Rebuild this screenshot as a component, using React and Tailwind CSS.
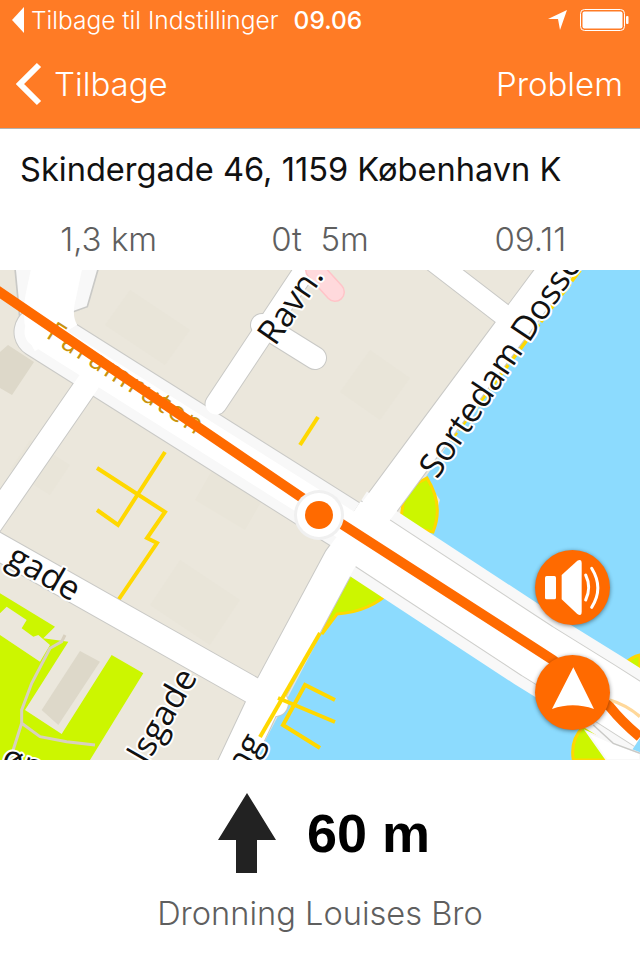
import React from "react";

const MAP_FONT = "'Open Sans', sans-serif";

// Zoomed crop coordinates (3x) are easier to trace, so map shapes sit in scaled groups
const Crop = ({ x, y, children }) => (
  <g transform={`translate(${x} ${y}) scale(0.3333)`}>{children}</g>
);

const Label = ({ x, y, rotate, anchor = "start", size = 34, children }) => (
  <text
    transform={`translate(${x} ${y}) rotate(${rotate})`}
    textAnchor={anchor}
    fontFamily={MAP_FONT}
    fontSize={size}
    fill="#111"
    stroke="#fff"
    strokeWidth="4"
    strokeLinejoin="round"
    style={{ paintOrder: "stroke" }}
  >
    {children}
  </text>
);

const StreetMap = () => {
  const sideRoads = [
    { d: "M88 383 L-10 525", w: 23 },
    { d: "M-10 542 L275 703", w: 26 },
    { d: "M216 404 L305 270", w: 21 },
    { d: "M262 325 L315 358", w: 22 },
    { d: "M435 262 L505 316", w: 21 },
    { d: "M555 270 L431 437 L340 560 L265 700 L232 770", w: 33 },
  ];
  const landRoad = "M40 332 L370 540";
  const bridge = "M345 525 L537 651 L600 690 L650 722";

  return (
    <svg viewBox="0 270 640 490" width="640" height="490" className="block">
      <rect x="0" y="270" width="640" height="490" fill="#ebe7dc" />

      {/* faint building blocks */}
      <g fill="#e9e5d9">
        <polygon points="130,290 190,330 165,365 105,325" />
        <polygon points="370,350 410,378 380,420 340,392" />
        <polygon points="180,560 240,600 210,645 150,605" />
        <polygon points="215,465 265,495 245,530 195,500" />
        <polygon points="30,440 70,465 50,495 10,470" />
      </g>
      <polygon points="0,352 8,345 34,362 12,395 0,388" fill="#ddd8c9" />

      {/* water */}
      <polygon
        points="580,270 640,270 640,760 255,760 322,632 340,612 392,590 430,530 440,500 425,478 453,437"
        fill="#8cdbfe"
      />
      <path d="M580 270 L453 437" stroke="#ffd800" strokeWidth="4" strokeDasharray="14 3" fill="none" />

      {/* park and islands */}
      <Crop x={0} y={510}>
        <polygon
          points="0,250 165,350 130,385 205,395 75,600 185,672 335,435 430,490 270,750 0,750"
          fill="#ccf600"
        />
        <polygon points="0,310 20,290 80,330 65,355 100,380 115,375 150,405 120,455 0,375" fill="#ebe7dc" />
        <polygon points="240,423 300,455 175,645 125,600" fill="#ddd8c9" />
        <path
          d="M195 375 L185 395 L150 415 L95 520 L65 600 L65 640 L30 750 M65 640 L120 680 L200 695 L285 705"
          stroke="#d8d0bf"
          strokeWidth="9"
          fill="none"
        />
      </Crop>
      <path d="M427 478 Q444 505 433 532 L400 525 L405 490 Z" fill="#ccf600" stroke="#ffd800" strokeWidth="3" />
      <path d="M392 590 Q370 612 337 614 L322 634 L350 560 Z" fill="#ccf600" stroke="#ffd800" strokeWidth="3" />
      <Crop x={320} y={510}>
        <path d="M760 750 Q750 690 790 650 L820 660 L860 750 Z" fill="#ccf600" stroke="#ffd800" strokeWidth="9" />
        <path d="M910 465 Q935 440 960 435 L960 510 Z" fill="#ccf600" stroke="#ffd800" strokeWidth="9" />
      </Crop>

      {/* sidewalks of the street running off the top left */}
      <Crop x={0} y={270}>
        <polygon points="45,-5 295,-5 262,110 220,125 60,150" fill="#f8f8f8" stroke="#c9c9c6" strokeWidth="5" />
      </Crop>

      {/* casings first, then the white carriageways */}
      <g fill="none" strokeLinecap="round" strokeLinejoin="round">
        {sideRoads.map((r) => (
          <path key={r.d} d={r.d} stroke="#c9c9c6" strokeWidth={r.w + 2} />
        ))}
        <path d={landRoad} stroke="#c9c9c6" strokeWidth="53" />
        <path d={landRoad} stroke="#f8f8f8" strokeWidth="51" />
        <path d={bridge} stroke="#f8f8f8" strokeWidth="80" strokeLinecap="butt" />
        <path d={bridge} stroke="#cfcfcc" strokeWidth="59" strokeLinecap="butt" />
        {sideRoads.map((r) => (
          <path key={r.d + "w"} d={r.d} stroke="#fff" strokeWidth={r.w} />
        ))}
        <path d="M58 262 L50 300 Q46 322 56 338" stroke="#fff" strokeWidth="50" strokeLinecap="butt" />
        <path d={landRoad} stroke="#fff" strokeWidth="31" />
        <path d={bridge} stroke="#fff" strokeWidth="57" strokeLinecap="butt" />
      </g>

      {/* road fanning out past the bridge */}
      <Crop x={320} y={510}>
        <polygon points="800,665 880,700 960,730 960,750 860,750" fill="#fff" stroke="#f8f8f8" strokeWidth="6" />
        <path d="M820 645 L880 700 L960 730" stroke="#c9c9c6" strokeWidth="4" fill="none" />
        <path d="M870 570 Q920 585 960 620" stroke="#ffd89a" strokeWidth="10" fill="none" />
      </Crop>

      <path d="M315 270 L335 292" stroke="#ffc4c8" strokeWidth="20" strokeLinecap="round" />
      <path d="M315 270 L335 292" stroke="#ffd9dc" strokeWidth="17" strokeLinecap="round" />

      {/* yellow paths */}
      <g stroke="#ffd800" strokeWidth="4" fill="none">
        <path d="M318 417 L300 445" />
        <path d="M165 452 L118 525 L97 510" />
        <path d="M97 468 L165 512 L147 538 L157 543 L119 599" />
        <path d="M320 633 L260 737" />
        <path d="M335 700 L305 685 L283 725 L320 748" />
        <path d="M278 698 L335 722" />
      </g>

      <text
        transform="translate(45 337) rotate(33)"
        fontFamily={MAP_FONT}
        fontSize="28"
        fill="#c8930c"
        textLength="180"
      >
        Faramruten
      </text>

      {/* route */}
      <path
        d="M-5 289 L320 510 L553 660 L610 707 Q622 722 640 737"
        stroke="#ff6a00"
        strokeWidth="10"
        fill="none"
      />

      <Label x={275} y={347} rotate={-55}>Ravn.</Label>
      <Label x={437} y={480} rotate={-56}>Sortedam Dossering</Label>
      <Label x={72} y={602} rotate={30} anchor="end">gade</Label>
      <Label x={198} y={677} rotate={-60} anchor="end">lsgade</Label>
      <Label x={264} y={742} rotate={-60} anchor="end">ng</Label>
      <Label x={0} y={766} rotate={20}>øn</Label>

      {/* position marker */}
      <circle cx="319" cy="515" r="25" fill="#f0f0f0" />
      <circle cx="319" cy="515" r="22" fill="#fff" />
      <circle cx="319" cy="515" r="14" fill="#ff6a00" />
    </svg>
  );
};

const App = () => {
  return (
    <div className="w-[640px] h-[960px] bg-white overflow-hidden font-['Inter',sans-serif]">
      {/* Orange header with iOS status bar */}
      <header className="h-[129px] bg-[#ff7b25] border-b border-[#b2b2b2] text-white">
        <div className="h-10 flex items-center pl-3 pr-[11px]">
          <svg width="12" height="26" viewBox="0 0 12 26" className="mr-[7px]">
            <polygon points="0,13 12,0 12,26" fill="#fff" />
          </svg>
          <span className="text-[24.5px] font-light leading-none">Tilbage til Indstillinger</span>
          <span className="ml-[15px] text-[24.5px] font-medium leading-none">09.06</span>
          <svg width="20" height="22" viewBox="0 0 20 22" className="ml-auto mr-3">
            <polygon points="0,10 19,1 12,21 10,10" fill="#fff" />
          </svg>
          <svg width="49" height="24" viewBox="0 0 49 24">
            <rect x="0.5" y="1.5" width="44" height="21" rx="4" fill="none" stroke="#fff" />
            <rect x="2.5" y="3.5" width="40" height="17" rx="2" fill="#fff" />
            <rect x="46" y="8" width="2.5" height="8" rx="1" fill="#fff" />
          </svg>
        </div>
        <div className="h-[88px] flex items-center justify-between pl-[16px] pr-[17px]">
          <div className="flex items-center gap-3">
            <svg width="26" height="44" viewBox="0 0 26 44">
              <path d="M23 3 L4 22 L23 41" stroke="#fff" strokeWidth="6" fill="none" />
            </svg>
            <span className="text-[33px] font-light leading-none">Tilbage</span>
          </div>
          <span className="text-[33px] font-light leading-none">Problem</span>
        </div>
      </header>

      {/* Destination and trip stats */}
      <div className="h-[141px] pt-[20px]">
        <p className="pl-[20px] text-[32.6px] leading-[40px] text-[#111]">Skindergade 46, 1159 København K</p>
        <div className="mt-[30px] grid grid-cols-3 text-[33px] leading-[40px] text-[#5f5f5f] font-light text-center">
          <span className="pl-[4px]">1,3 km</span>
          <span>0t&nbsp;&nbsp;5m</span>
          <span className="pr-[6px]">09.11</span>
        </div>
      </div>

      {/* Map with floating buttons */}
      <div className="relative h-[490px] overflow-hidden">
        <StreetMap />
        <div className="absolute left-[535px] top-[280px] w-[75px] h-[75px] rounded-full bg-[#ff6a00] shadow-[0_1px_4px_rgba(0,0,0,0.45)]">
          <svg viewBox="645 120 225 225" width="75" height="75">
            <rect x="675" y="198" width="33" height="70" rx="5" fill="#fff" />
            <path d="M725 195 L772 152 Q785 145 785 160 L785 305 Q785 320 772 312 L725 268 Z" fill="#fff" />
            <path d="M797 195 Q815 232 797 270" stroke="#fff" strokeWidth="9" strokeLinecap="round" fill="none" />
            <path d="M815 175 Q852 235 815 292" stroke="#fff" strokeWidth="9" strokeLinecap="round" fill="none" />
          </svg>
        </div>
        <div className="absolute left-[535px] top-[385px] w-[75px] h-[75px] rounded-full bg-[#ff6a00] shadow-[0_1px_4px_rgba(0,0,0,0.45)]">
          <svg viewBox="645 435 225 225" width="75" height="75">
            <path d="M760 472 L822 597 Q758 575 696 597 Z" fill="#fff" />
          </svg>
        </div>
      </div>

      {/* Next manoeuvre */}
      <div className="h-[200px] flex flex-col items-center">
        <div className="mt-[33px] flex items-center gap-[31px] pl-2">
          <svg width="58" height="80" viewBox="0 0 58 80">
            <polygon points="29,0 58,47 39,47 39,80 18,80 18,47 0,47" fill="#222" />
          </svg>
          <span className="font-['Liberation_Sans',sans-serif] font-bold text-[54px] leading-none text-black">60 m</span>
        </div>
        <p className="mt-[20px] text-[32.6px] leading-[40px] text-[#5f5f5f] font-light">Dronning Louises Bro</p>
      </div>
    </div>
  );
};

export default App;
